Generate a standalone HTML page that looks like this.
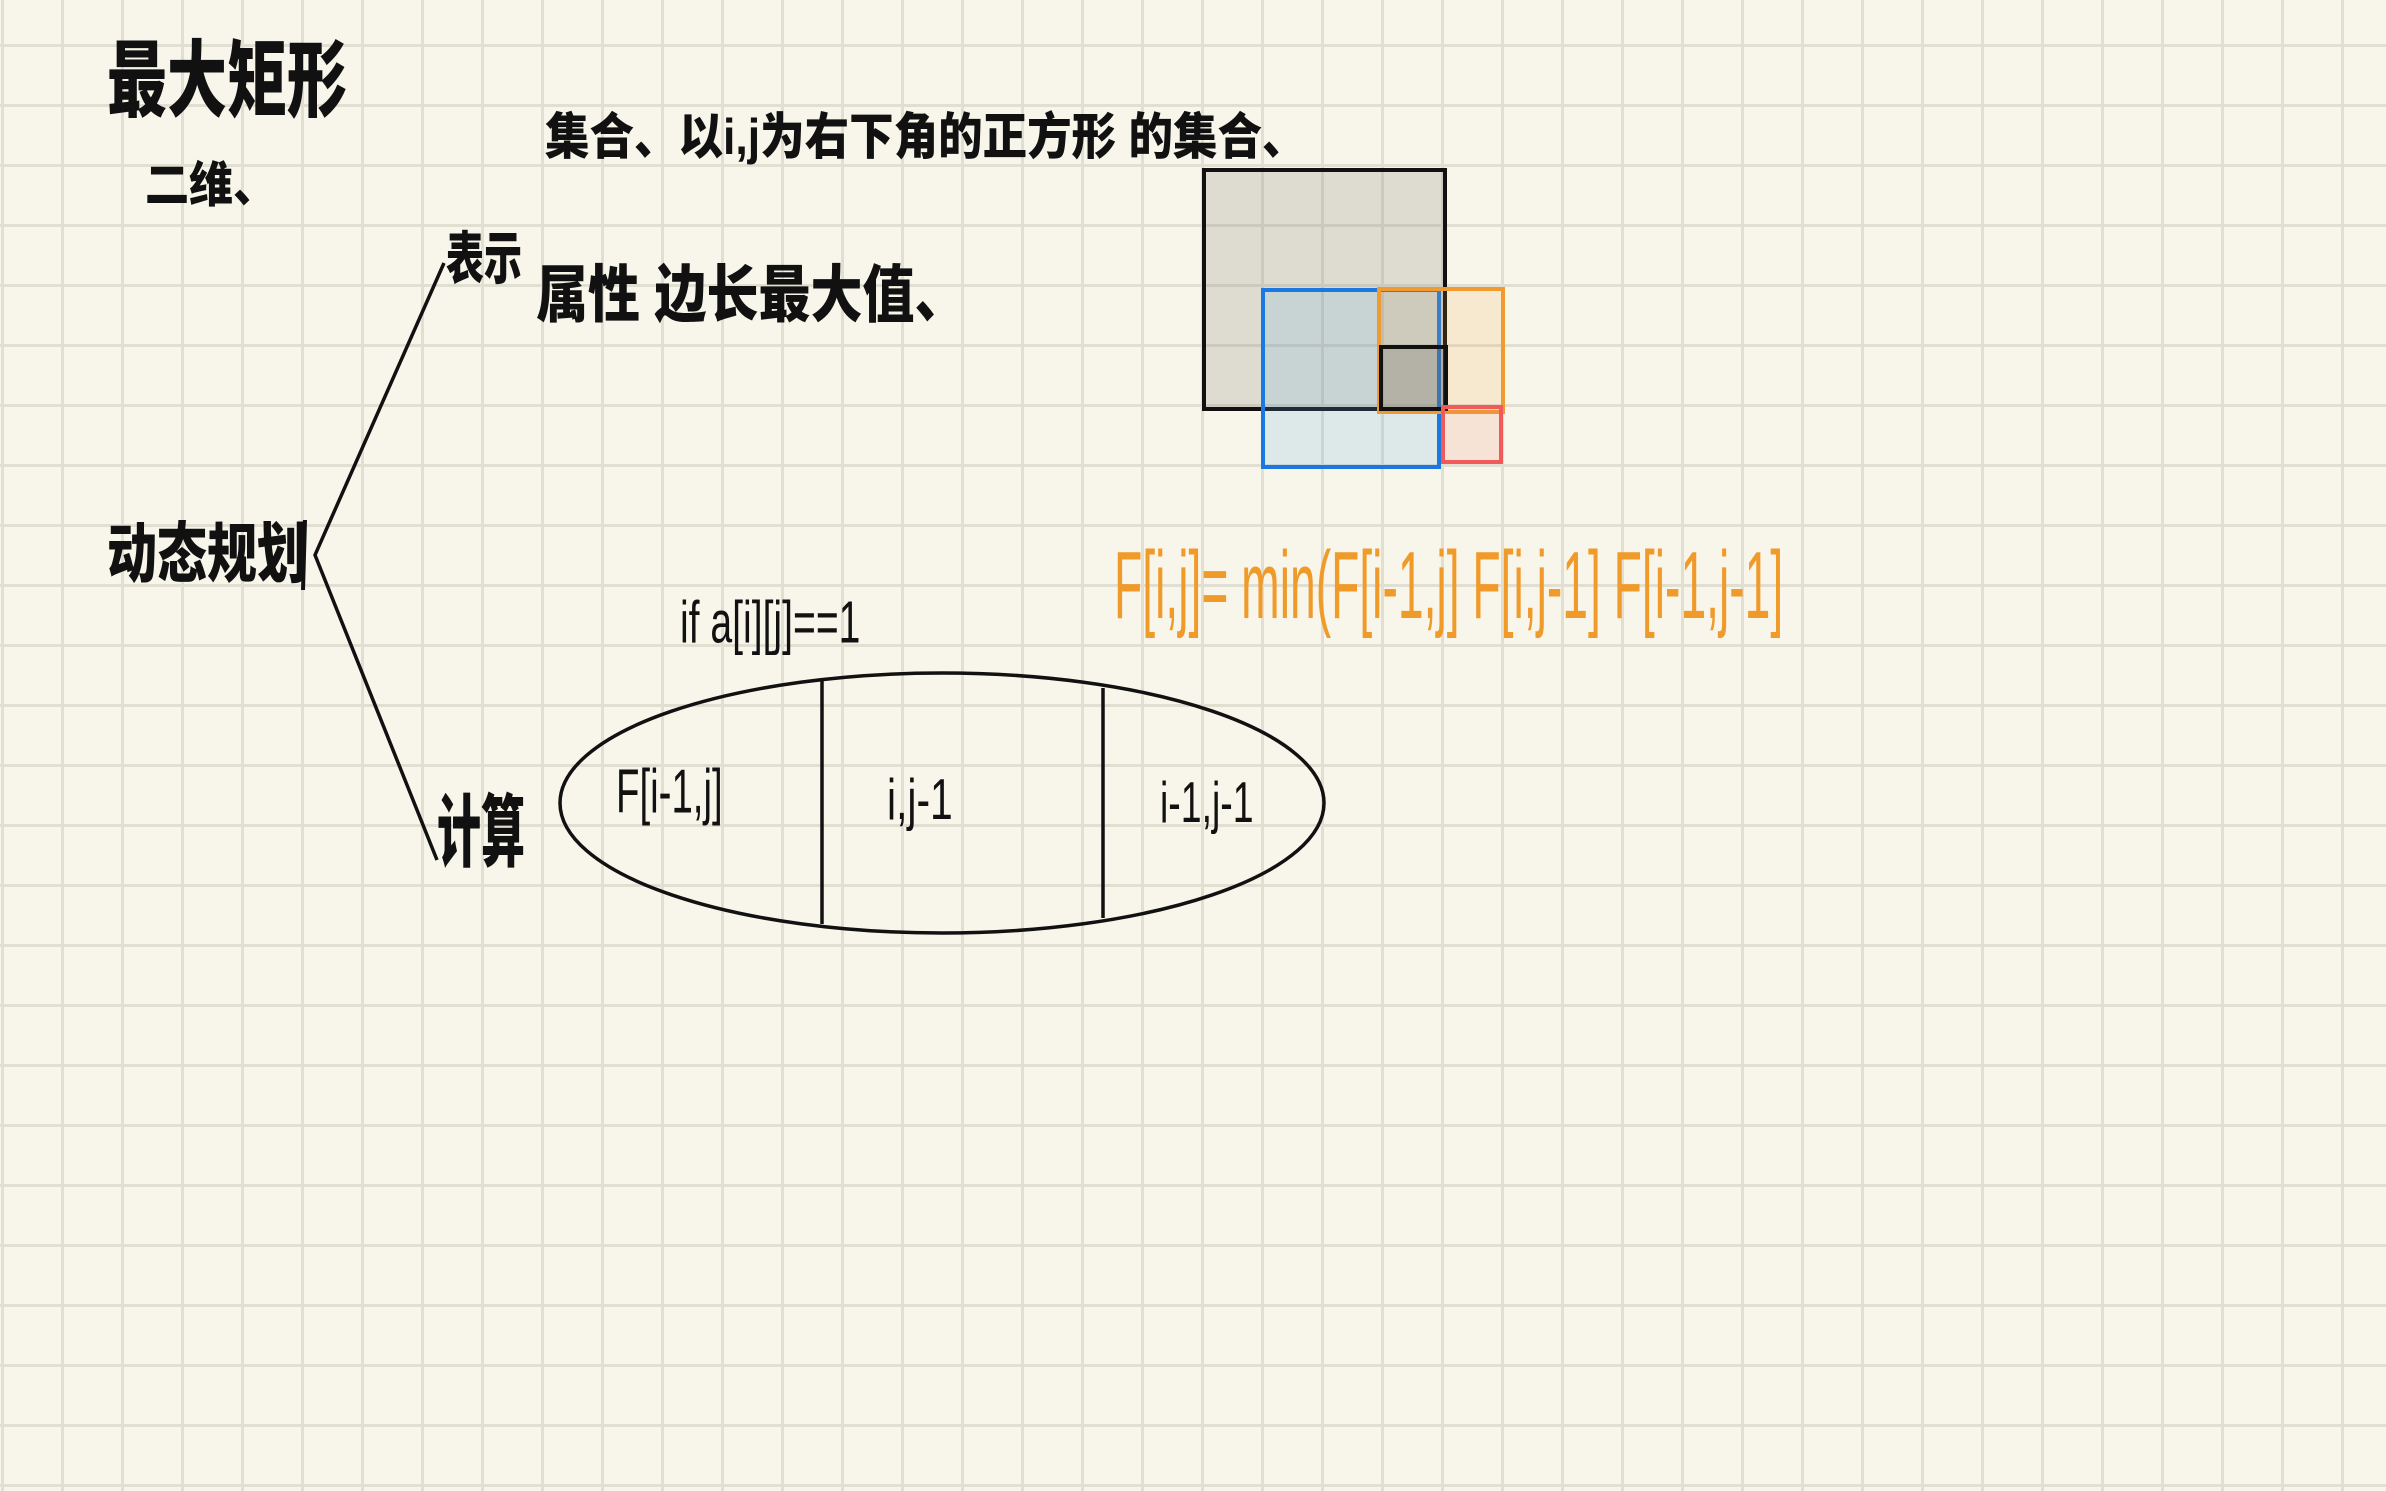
<!DOCTYPE html>
<html><head><meta charset="utf-8">
<style>
html,body{margin:0;padding:0}
body{width:2386px;height:1491px;position:relative;overflow:hidden;background:#f8f6ea;
background-image:linear-gradient(to right,#e1ded2 0,#e1ded2 3px,transparent 3px),linear-gradient(to bottom,#e1ded2 0,#e1ded2 3px,transparent 3px);
background-size:60px 60px;background-position:1px 44px;}
.t{position:absolute;font-family:"Liberation Sans","Noto Sans CJK SC",sans-serif;font-weight:900;color:#111;white-space:nowrap;line-height:1;transform-origin:0 0}
.o{color:#f09a2a;font-weight:normal;font-family:"Liberation Sans",sans-serif}
svg{position:absolute;left:0;top:0}
</style></head><body>
<svg width="2386" height="1491">
<rect x="1204" y="170" width="241" height="239" fill="rgba(120,120,110,0.2)" stroke="#111" stroke-width="4"/>
<rect x="1263" y="290" width="176" height="177" fill="rgba(100,170,230,0.18)" stroke="#1a78e0" stroke-width="4"/>
<rect x="1379" y="289" width="124" height="123" fill="rgba(240,160,60,0.15)" stroke="#f09a30" stroke-width="4"/>
<rect x="1381" y="347" width="65" height="62" fill="rgba(80,80,80,0.2)" stroke="#111" stroke-width="4"/>
<rect x="1443" y="407" width="58" height="55" fill="rgba(240,120,100,0.15)" stroke="#f05a5a" stroke-width="4"/>
<path d="M444 263 L315 555 L437 860" fill="none" stroke="#111" stroke-width="3.5"/>
<path d="M305 520 L303 590" stroke="#111" stroke-width="4"/>
<ellipse cx="942" cy="803" rx="382" ry="130" fill="none" stroke="#111" stroke-width="3.5"/>
<path d="M822 679 L822 924 M1103 688 L1103 918" stroke="#111" stroke-width="3.5"/>
</svg>
<div class="t" style="left:107px;top:40px;font-size:60px;transform:scale(1,1.4)">最大矩形</div>
<div class="t" style="left:145px;top:162px;font-size:44px;transform:scale(1,1.1)">二维、</div>
<div class="t" style="left:545px;top:112px;font-size:50px;transform:scaleX(0.89)">集合、以i,j为右下角的正方形 的集合、</div>
<div class="t" style="left:446px;top:232px;font-size:38px;transform:scale(1,1.5)">表示</div>
<div class="t" style="left:536px;top:265px;font-size:52px;transform:scale(1,1.2)">属性 边长最大值、</div>
<div class="t" style="left:107px;top:522px;font-size:50px;transform:scale(1,1.3)">动态规划</div>
<div class="t" style="left:437px;top:795px;font-size:44px;transform:scale(1,1.8)">计算</div>
<div class="t" style="left:680px;top:592px;font-size:46px;font-weight:normal;transform:scale(0.85,1.3)">if a[i][j]==1</div>
<div class="t o" style="left:1114px;top:538px;font-size:68px;transform:scale(0.68,1.4)">F[i,j]= min(F[i-1,j] F[i,j-1] F[i-1,j-1]</div>
<div class="t" style="left:616px;top:762px;font-size:48px;font-weight:normal;transform:scale(0.8,1.3)">F[i-1,j]</div>
<div class="t" style="left:887px;top:772px;font-size:48px;font-weight:normal;transform:scale(0.85,1.2)">i,j-1</div>
<div class="t" style="left:1160px;top:775px;font-size:44px;font-weight:normal;transform:scale(0.85,1.3)">i-1,j-1</div>
</body></html>
